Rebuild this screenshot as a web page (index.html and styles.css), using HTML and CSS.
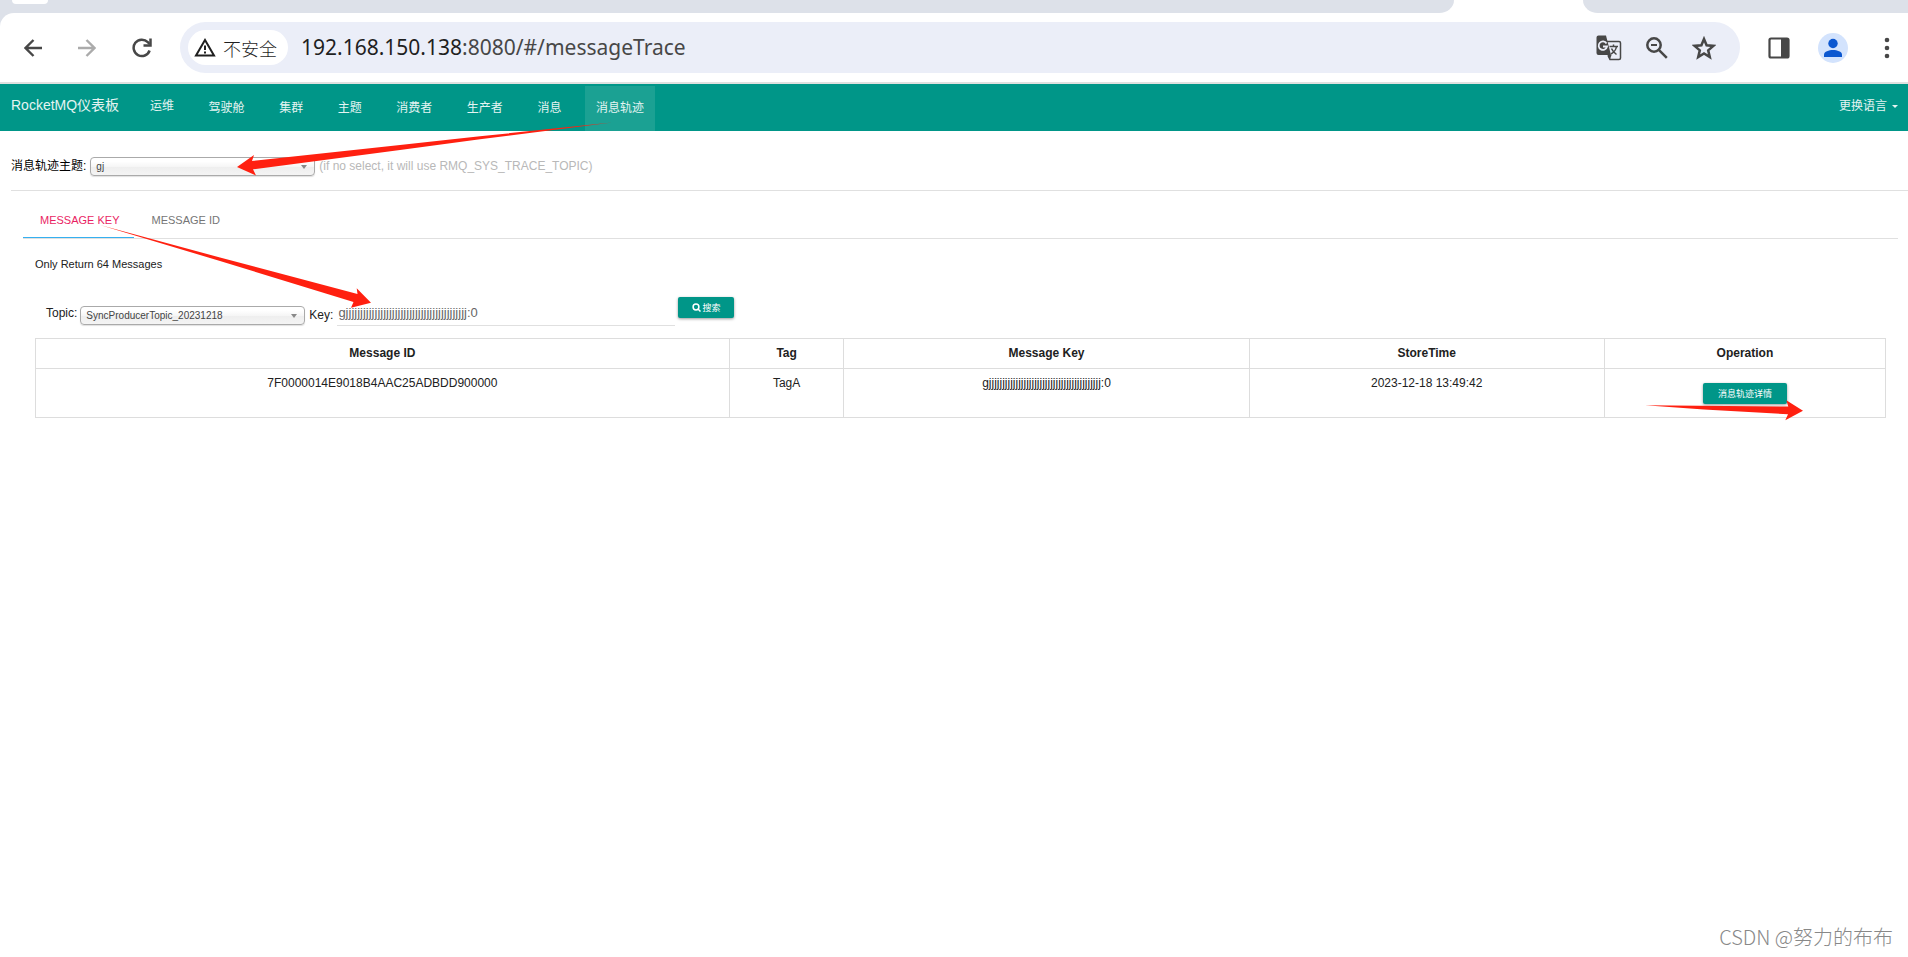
FILE: index.html
```html
<!DOCTYPE html>
<html lang="zh-CN">
<head>
<meta charset="utf-8">
<title>RocketMQ仪表板</title>
<link rel="stylesheet" href="styles.css">
</head>
<body>
<div class="browser">
  <div class="tabstrip">
    <div class="strip-left"><span class="strip-pill"></span></div>
    <div class="strip-right"></div>
  </div>
  <div class="toolbar">
    <div class="nav-buttons">
      <button class="icon-btn" aria-label="Back"><svg width="18" height="18" viewBox="0 0 18 18" fill="none" stroke="#474747" stroke-width="2.4"><path d="M18 9H2M9.500 1L1.500 9l8 8"/></svg></button>
      <button class="icon-btn" aria-label="Forward"><svg width="18" height="18" viewBox="0 0 18 18" fill="none" stroke="#ababab" stroke-width="2.4"><path d="M0 9h16M8.500 1l8 8-8 8"/></svg></button>
      <button class="icon-btn" aria-label="Reload"><svg width="20" height="20" viewBox="0 0 20 20" fill="none" stroke="#474747" stroke-width="2.5"><path d="M17.600 12.500A8.200 8.200 0 1 1 15.800 4.200L17.500 6"/><path d="M18.500 0.500V7.500H11.500"/></svg></button>
    </div>
    <div class="omnibox">
      <button class="chip"><svg width="22" height="19" viewBox="0 0 22 19" fill="none" stroke="#1f1f1f" stroke-width="2"><path d="M11 2L2 17.500h18z"/><path d="M11 7.500v4.500M11 13.500v2"/></svg>不安全</button>
      <span class="url"><span class="host">192.168.150.138</span>:8080/#/messageTrace</span>
      <div class="omni-icons">
        <button class="icon-btn" aria-label="Translate"><svg width="26" height="26" viewBox="0 0 26 26"><path d="M11 6.500h12a1.500 1.500 0 0 1 1.500 1.500v15a1.500 1.500 0 0 1-1.500 1.500H14l-2-4" fill="none" stroke="#474747" stroke-width="1.500"/><path d="M2.500.5h7.500l5 19.500H2.500a2 2 0 0 1-2-2V2.500a2 2 0 0 1 2-2z" fill="#474747"/><path d="M11.500 20l2.500 4.500 1.500-4.500z" fill="#474747"/><path d="M10.500 8.500A4.200 4.200 0 1 0 11 11.500H7" fill="none" stroke="#ebeef8" stroke-width="1.800"/><path d="M13.500 11.500h8.500M17.500 9.500v2M20.500 11.500c-.5 3-3 6-5.500 7.500M15.500 13.500c1 2.500 3 4.500 5 6" fill="none" stroke="#474747" stroke-width="1.500"/></svg></button>
        <button class="icon-btn" aria-label="Zoom"><svg width="22" height="22" viewBox="0 0 22 22" fill="none" stroke="#474747" stroke-width="2.500"><circle cx="8" cy="8" r="6.700"/><path d="M12.800 12.800l8 8"/><path d="M5 8h6" stroke-width="2"/></svg></button>
        <button class="icon-btn" aria-label="Bookmark"><svg width="24" height="24" viewBox="0 0 24 24" fill="none" stroke="#474747" stroke-width="2.500"><path d="M12 3l2.600 6.300 6.800.6-5.200 4.500 1.600 6.700L12 17.500l-5.800 3.600 1.600-6.700L2.600 9.900l6.800-.6z"/></svg></button>
      </div>
    </div>
    <div class="tool-icons">
      <button class="icon-btn" aria-label="Side panel"><svg width="22" height="22" viewBox="0 0 22 22"><rect x="1.500" y="1.500" width="19" height="19" rx="1.500" fill="none" stroke="#474747" stroke-width="2.200"/><path d="M13 1h7v20h-7z" fill="#474747"/></svg></button>
      <button class="icon-btn" aria-label="Profile"><svg width="30" height="30" viewBox="0 0 30 30"><circle cx="15" cy="15" r="15" fill="#d3e3fd"/><circle cx="15" cy="10.500" r="4.700" fill="#0b57d0"/><path d="M6 24v-2.500C6 18.500 11 17 15 17s9 1.500 9 4.500V24z" fill="#0b57d0"/></svg></button>
      <button class="icon-btn" aria-label="Menu"><svg width="6" height="22" viewBox="0 0 6 22" fill="#474747"><circle cx="3" cy="3" r="2.300"/><circle cx="3" cy="11" r="2.300"/><circle cx="3" cy="19" r="2.300"/></svg></button>
    </div>
  </div>
</div>

<header class="navbar">
  <a class="brand" href="#/">RocketMQ仪表板</a>
  <nav class="menu">
    <a class="ops" href="#/ops">运维</a>
    <a href="#/dashboard">驾驶舱</a>
    <a href="#/cluster">集群</a>
    <a href="#/topic">主题</a>
    <a href="#/consumer">消费者</a>
    <a href="#/producer">生产者</a>
    <a href="#/message">消息</a>
    <a class="active" href="#/messageTrace">消息轨迹</a>
  </nav>
  <button class="language">更换语言<span class="caret"></span></button>
</header>

<main class="page">
  <div class="trace-topic">
    <label for="trace">消息轨迹主题:</label>
    <span class="chosen"><select id="trace"><option>gj</option></select></span>
    <span class="hint">(if no select, it will use RMQ_SYS_TRACE_TOPIC)</span>
  </div>
  <section class="content">
    <div class="tabs" role="tablist">
      <button class="tab selected" role="tab" aria-selected="true">MESSAGE KEY</button>
      <button class="tab" role="tab" aria-selected="false">MESSAGE ID</button>
    </div>
    <div class="panel">
      <h5 class="note">Only Return 64 Messages</h5>
      <form class="search">
        <label for="topic">Topic:</label>
        <span class="chosen"><select id="topic"><option>SyncProducerTopic_20231218</option></select></span>
        <label class="key-label" for="key">Key:</label>
        <input class="key" id="key" type="text" value="gjjjjjjjjjjjjjjjjjjjjjjjjjjjjjjjjjjjjjjjjjj:0">
        <button class="raised" type="button"><svg width="9" height="9" viewBox="0 0 9 9" fill="none" stroke="#fff" stroke-width="1.500"><circle cx="4" cy="4" r="2.900"/><path d="M6 6l2.500 2.500"/></svg>搜索</button>
      </form>
      <table class="results">
        <colgroup><col class="c-id"><col class="c-tag"><col class="c-key"><col class="c-time"><col class="c-op"></colgroup>
        <thead><tr><th>Message ID</th><th>Tag</th><th>Message Key</th><th>StoreTime</th><th>Operation</th></tr></thead>
        <tbody><tr>
          <td>7F0000014E9018B4AAC25ADBDD900000</td>
          <td>TagA</td>
          <td>gjjjjjjjjjjjjjjjjjjjjjjjjjjjjjjjjjjjjjjjjjj:0</td>
          <td>2023-12-18 13:49:42</td>
          <td><button class="raised detail" type="button">消息轨迹详情</button></td>
        </tr></tbody>
      </table>
    </div>
  </section>
</main>

<svg class="arrows" width="1908" height="957" viewBox="0 0 1908 957" fill="#ff2010" aria-hidden="true">
  <path d="M612 122.500L480 136.300 400 145 252 161 254 155 237 167 256 175.500 253 169.300 400 150 480 139.200z"/>
  <path d="M100 225L220 257.500 357.500 294 356.700 288.300 371 302.700 351 307.700 353.500 302 220 261z"/>
  <path d="M1645 405.300L1788.300 406.500 1786.300 400.300 1803 410.700 1785.300 420.300 1788 414.300 1704 409.500z"/>
</svg>
<div class="watermark">CSDN @努力的布布</div>
</body>
</html>
```
FILE: styles.css
```css
* { box-sizing: border-box; }

body {
  margin: 0;
  min-height: 100vh;
  position: relative;
  overflow: hidden;
  background: #fff;
  color: #212121;
  font: 12px/18px "Liberation Sans", "Noto Sans CJK SC", sans-serif;
}

button, input, select { font: inherit; color: inherit; margin: 0; }
button { border: 0; padding: 0; background: none; cursor: pointer; }
a { color: inherit; text-decoration: none; }
svg { display: block; }

/* Browser frame */
.browser { border-bottom: 2px solid #dfe1e0; background: #dde1e9; }
.tabstrip { display: flex; justify-content: space-between; height: 13px; background: #fff; }
.strip-left { flex: 0 0 1454px; background: #dde1e9; border-bottom-right-radius: 16px 14px; }
.strip-right { flex: 0 0 325px; background: #dde1e9; border-bottom-left-radius: 16px 14px; }
.strip-pill { display: block; width: 36px; height: 4px; margin-left: 12px; background: #fff; border-radius: 0 0 16px 16px; }
.toolbar {
  display: flex;
  align-items: center;
  height: 69px;
  padding: 0 18px 0 24px;
  background: #fff;
  border-top-left-radius: 14px;
}
.nav-buttons { display: flex; align-items: center; gap: 36px; }
.omnibox {
  display: flex;
  align-items: center;
  flex: 1;
  height: 51px;
  margin: 0 28px;
  padding: 0 24px 0 8px;
  border-radius: 26px;
  background: #ebeef8;
}
.chip {
  display: flex;
  align-items: center;
  gap: 7px;
  height: 35px;
  padding: 0 11px 0 6px;
  border-radius: 18px;
  background: #fff;
  color: #1f1f1f;
  font: 300 18px/26px "Noto Sans CJK SC", sans-serif;
}
.url { flex: 1; margin-left: 13px; padding-bottom: 2px; color: #474747; font: 21px/30px "Noto Sans", sans-serif; }
.host { color: #1f1f1f; }
.omni-icons { display: flex; align-items: center; gap: 24px; }
.tool-icons { display: flex; align-items: center; gap: 28px; }
.tool-icons .icon-btn:last-child { margin-left: 8px; }

/* Dashboard navigation */
.navbar {
  display: flex;
  height: 47px;
  padding: 0 10px 0 11px;
  background: #009688;
  color: #e4f4f2;
}
.brand { width: 128px; padding-top: 11px; font-size: 14px; line-height: 20px; }
.menu { display: flex; justify-content: space-between; width: 516px; padding-top: 2px; }
.menu a { padding: 13px 11px; }
.menu .ops { padding-top: 11px; }
.menu .active { background: #1ba193; }
.language { display: flex; align-items: center; gap: 5px; height: 44px; margin-left: auto; }
.caret { border: 3px solid transparent; border-top-color: #e4f4f2; border-bottom: 0; }

/* Trace topic row */
.page { padding: 26px 0 0 11px; }
.trace-topic { display: flex; gap: 4px; height: 34px; border-bottom: 1px solid #e0e0e0; }
.trace-topic label { color: #000; }
.trace-topic .hint { color: #b8b8b8; }
.chosen { position: relative; height: 19px; }
.chosen select {
  display: block;
  width: 225px;
  height: 19px;
  padding: 1px 18px 0 5px;
  appearance: none;
  border: 1px solid #aaa;
  border-radius: 4px;
  background: linear-gradient(#fff 20%, #f6f6f6 50%, #eee 52%, #f4f4f4);
  box-shadow: 0 1px 1px #00000020;
  color: #444;
  font-size: 10px;
  line-height: 16px;
}
.chosen::after {
  content: "";
  position: absolute;
  right: 8px;
  top: 8px;
  border: 3px solid transparent;
  border-top: 4px solid #888;
  border-bottom: 0;
}

/* Tabs and search */
.content { padding: 12px 10px 0 12px; }
.tabs { display: flex; height: 36px; border-bottom: 1px solid #e0e0e0; }
.tab { height: 35px; padding: 0 15px 0 17px; border-bottom: 1px solid transparent; color: #757575; font-size: 11px; }
.tab.selected { color: #e91e63; border-bottom-color: #35b0f0; }
.panel { padding: 16px 12px 0; }
.note { margin: 0; font-size: 11px; font-weight: 400; }
.search { display: flex; align-items: flex-start; gap: 3px; padding: 24px 0 12px 11px; }
.search label { padding-top: 7px; }
.search .chosen { margin-top: 9px; }
.search .key-label { padding: 9px 1px 0; }
.key {
  width: 338px;
  height: 29px;
  padding: 3px 1px 0;
  border: 0;
  border-bottom: 1px solid #e0e0e0;
  background: none;
  color: #666;
  font-size: 13px;
}
.raised {
  display: inline-flex;
  align-items: center;
  gap: 1px;
  height: 21px;
  padding: 0 14px;
  border-radius: 2px;
  background: #009688;
  box-shadow: 0 1px 3px #00000066;
  color: #fff;
  font-size: 9px;
}
.detail { padding: 0 15px; }

.results { width: 100%; border-collapse: collapse; table-layout: fixed; text-align: center; }
.results th, .results td { border: 1px solid #ddd; padding: 5px 0 6px; vertical-align: top; }
.results td { height: 49px; }
.results .detail { margin-top: 9px; }
.c-id { width: 37.500%; }
.c-tag { width: 6.200%; }
.c-key { width: 21.900%; }
.c-time { width: 19.200%; }
.c-op { width: 15.200%; }

/* Overlays */
.arrows { position: absolute; left: 0; top: 0; pointer-events: none; }
.watermark {
  position: absolute;
  right: 15px;
  bottom: 6px;
  color: #888;
  font: 300 20px/28px "Noto Sans CJK SC", sans-serif;
}
```
